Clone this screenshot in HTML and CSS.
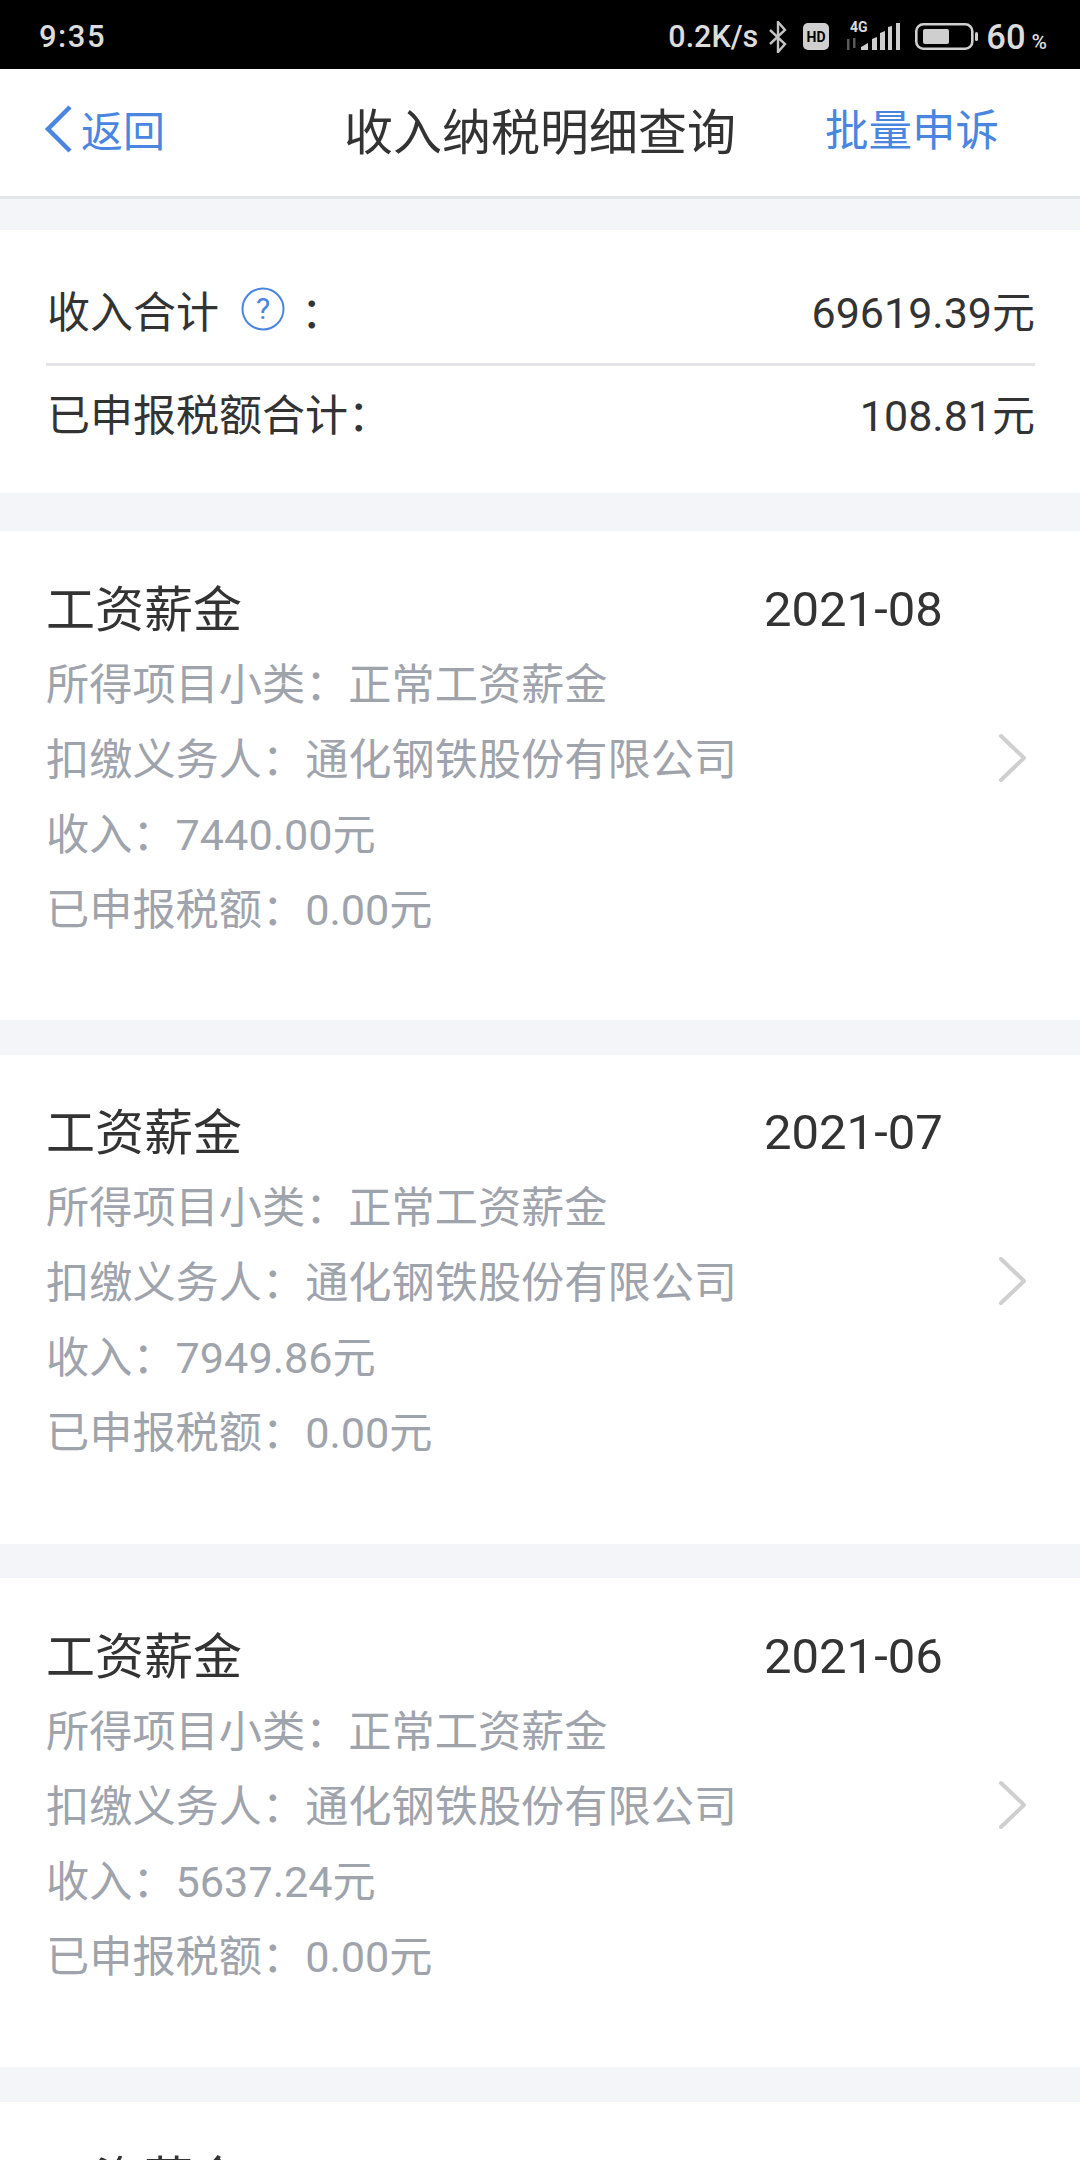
FILE: index.html
```html
<!DOCTYPE html>
<html lang="zh">
<head>
<meta charset="utf-8">
<title>收入纳税明细查询</title>
<link rel="stylesheet" href="styles.css">
</head>
<body>
<div class="status">
  <span class="time">9:35</span>
  <div class="status-right">
    <span class="speed">0.2K/s</span>
    <svg class="ic-bt" width="20" height="32" viewBox="0 0 20 32"><path d="M2 9 17 23 10 31V1l7 8L2 23" fill="none" stroke="#c4c4c4" stroke-width="2.400"/></svg>
    <svg class="ic-hd" width="26" height="27" viewBox="0 0 26 27"><rect width="26" height="27" rx="5" fill="#cfcfcf"/><text class="hd-text" x="13" y="19">HD</text></svg>
    <svg class="ic-sig" width="54" height="32" viewBox="0 0 54 32"><text class="sig-4g" x="4" y="14">4G</text><g fill="#5a5a5a"><rect x="1" y="21" width="2.500" height="11"/><rect x="7" y="20" width="2.500" height="10"/></g><path class="sig-bars" d="M15 32v-3l7-4v7zM26 32V21l5-2v13zM34 32V15l5-2v19zM42 32V9l4-1v24zM50 32V5h4v27z"/></svg>
    <svg class="ic-bat" width="63" height="27" viewBox="0 0 63 27"><rect x="1.300" y="1.300" width="56" height="24.400" rx="7" fill="none" stroke="#cfcfcf" stroke-width="2.600"/><rect x="8" y="6" width="26" height="15" rx="2" fill="#cfcfcf"/><rect x="60" y="9" width="3" height="9" rx="1.500" fill="#cfcfcf"/></svg>
    <span class="pct">60<small>%</small></span>
  </div>
</div>

<header class="nav">
  <div class="back">
    <svg width="28" height="48" viewBox="0 0 28 48"><path d="M26 2 4 24l22 22" fill="none" stroke="#4a86e0" stroke-width="4.500"/></svg>
    <span>返回</span>
  </div>
  <h1 class="title">收入纳税明细查询</h1>
  <span class="action">批量申诉</span>
</header>

<section class="summary">
  <div class="sum-row sum-top">
    <span class="sum-label"><span>收入合计</span>
      <svg class="help" width="44" height="44" viewBox="0 0 44 44"><circle cx="22" cy="22" r="20.500" fill="none" stroke="#4a86e0" stroke-width="2"/><text class="help-q" x="22" y="32">?</text></svg>
      <span>：</span></span>
    <span>69619.39元</span>
  </div>
  <div class="sum-row sum-bottom">
    <span>已申报税额合计：</span>
    <span>108.81元</span>
  </div>
</section>

<section class="item">
  <div class="item-body">
    <div class="item-head"><span class="item-title">工资薪金</span><span class="item-date">2021-08</span></div>
    <p class="line">所得项目小类：正常工资薪金</p>
    <p class="line">扣缴义务人：通化钢铁股份有限公司</p>
    <p class="line">收入：7440.00元</p>
    <p class="line">已申报税额：0.00元</p>
  </div>
  <svg class="chev" width="28" height="50" viewBox="0 0 28 50"><path d="M3 3l23 22L3 47" fill="none" stroke="#cfcfcf" stroke-width="4" stroke-linecap="round" stroke-linejoin="round"/></svg>
</section>

<section class="item">
  <div class="item-body">
    <div class="item-head"><span class="item-title">工资薪金</span><span class="item-date">2021-07</span></div>
    <p class="line">所得项目小类：正常工资薪金</p>
    <p class="line">扣缴义务人：通化钢铁股份有限公司</p>
    <p class="line">收入：7949.86元</p>
    <p class="line">已申报税额：0.00元</p>
  </div>
  <svg class="chev" width="28" height="50" viewBox="0 0 28 50"><path d="M3 3l23 22L3 47" fill="none" stroke="#cfcfcf" stroke-width="4" stroke-linecap="round" stroke-linejoin="round"/></svg>
</section>

<section class="item">
  <div class="item-body">
    <div class="item-head"><span class="item-title">工资薪金</span><span class="item-date">2021-06</span></div>
    <p class="line">所得项目小类：正常工资薪金</p>
    <p class="line">扣缴义务人：通化钢铁股份有限公司</p>
    <p class="line">收入：5637.24元</p>
    <p class="line">已申报税额：0.00元</p>
  </div>
  <svg class="chev" width="28" height="50" viewBox="0 0 28 50"><path d="M3 3l23 22L3 47" fill="none" stroke="#cfcfcf" stroke-width="4" stroke-linecap="round" stroke-linejoin="round"/></svg>
</section>

<section class="item">
  <div class="item-body">
    <div class="item-head"><span class="item-title">工资薪金</span></div>
  </div>
</section>
</body>
</html>
```
FILE: styles.css
```css
* { box-sizing: border-box; }
html, body { margin: 0; padding: 0; }
body {
  width: 1080px;
  height: 2160px;
  overflow: hidden;
  background: #f4f5f9;
  font-family: Roboto, "Noto Sans CJK SC", sans-serif;
  color: #333;
}
.status {
  height: 69px;
  background: #000;
  color: #dcdcdc;
  display: flex;
  align-items: center;
  justify-content: space-between;
  padding: 4px 33px 0 39px;
}
.time { font-size: 31px; font-weight: 500; letter-spacing: 1.500px; }
.status-right { display: flex; align-items: center; }
.speed { font-size: 30.500px; font-weight: 500; margin-right: 10px; }
.ic-bt { margin-right: 15px; }
.ic-hd { margin-right: 17px; }
.ic-sig { margin: 0 15px 6px 0; }
.ic-bat { margin-right: 8px; }
.sig-4g { font: 700 14px Roboto, sans-serif; fill: #dcdcdc; }
.sig-bars { fill: #cfcfcf; }
.hd-text { font: 700 14px Roboto, sans-serif; fill: #000; text-anchor: middle; }
.pct { font-size: 34.500px; font-weight: 500; }
.pct small { font-size: 21px; margin-left: 6px; }

.nav {
  height: 130px;
  background: #fff;
  border-bottom: 3px solid #e3e5e9;
  display: grid;
  grid-template-columns: 1fr auto 1fr;
  align-items: center;
  padding: 0 0 8px;
}
.back { display: flex; align-items: center; gap: 9px; color: #4a86e0; font-size: 42px; padding-left: 44px; }
.title { margin: 0; font-size: 49px; font-weight: 400; color: #333; }
.action { color: #4a86e0; font-size: 43.500px; justify-self: end; padding: 0 81px 3px 0; }

.summary {
  margin-top: 31px;
  height: 263px;
  background: #fff;
  padding: 0 45px 0 46px;
  font-size: 43px;
}
.sum-row { display: flex; justify-content: space-between; align-items: center; }
.sum-top { height: 136px; border-bottom: 3px solid #e3e3e8; padding: 25px 0 0 1px; }
.sum-bottom { height: 94px; padding: 0 0 3px 1px; }
.sum-label { display: flex; align-items: center; gap: 22px; }
.sum-label span:last-child { margin-left: -6px; }
.help-q { font: 400 30px Roboto, sans-serif; fill: #4a86e0; text-anchor: middle; }

.item {
  margin-top: 34.670px;
  height: 489px;
  background: #fff;
  display: flex;
  justify-content: space-between;
  align-items: center;
  padding: 0 54px 0 46px;
}
.summary + .item { margin-top: 38px; }
.item:last-child { height: 60px; align-items: flex-start; }
.item-body { align-self: flex-start; padding-top: 49px; width: 900px; }
.item-head { display: flex; height: 50px; align-items: center; margin-bottom: 13px; }
.item-title { font-size: 49px; color: #333; width: 718px; }
.item-date { font-size: 49px; color: #333; padding-top: 8px; }
.line {
  margin: 0;
  height: 75px;
  display: flex;
  align-items: center;
  font-size: 43.200px;
  color: #9fa3ab;
}
.chev { display: block; margin-bottom: 36px; }
```
